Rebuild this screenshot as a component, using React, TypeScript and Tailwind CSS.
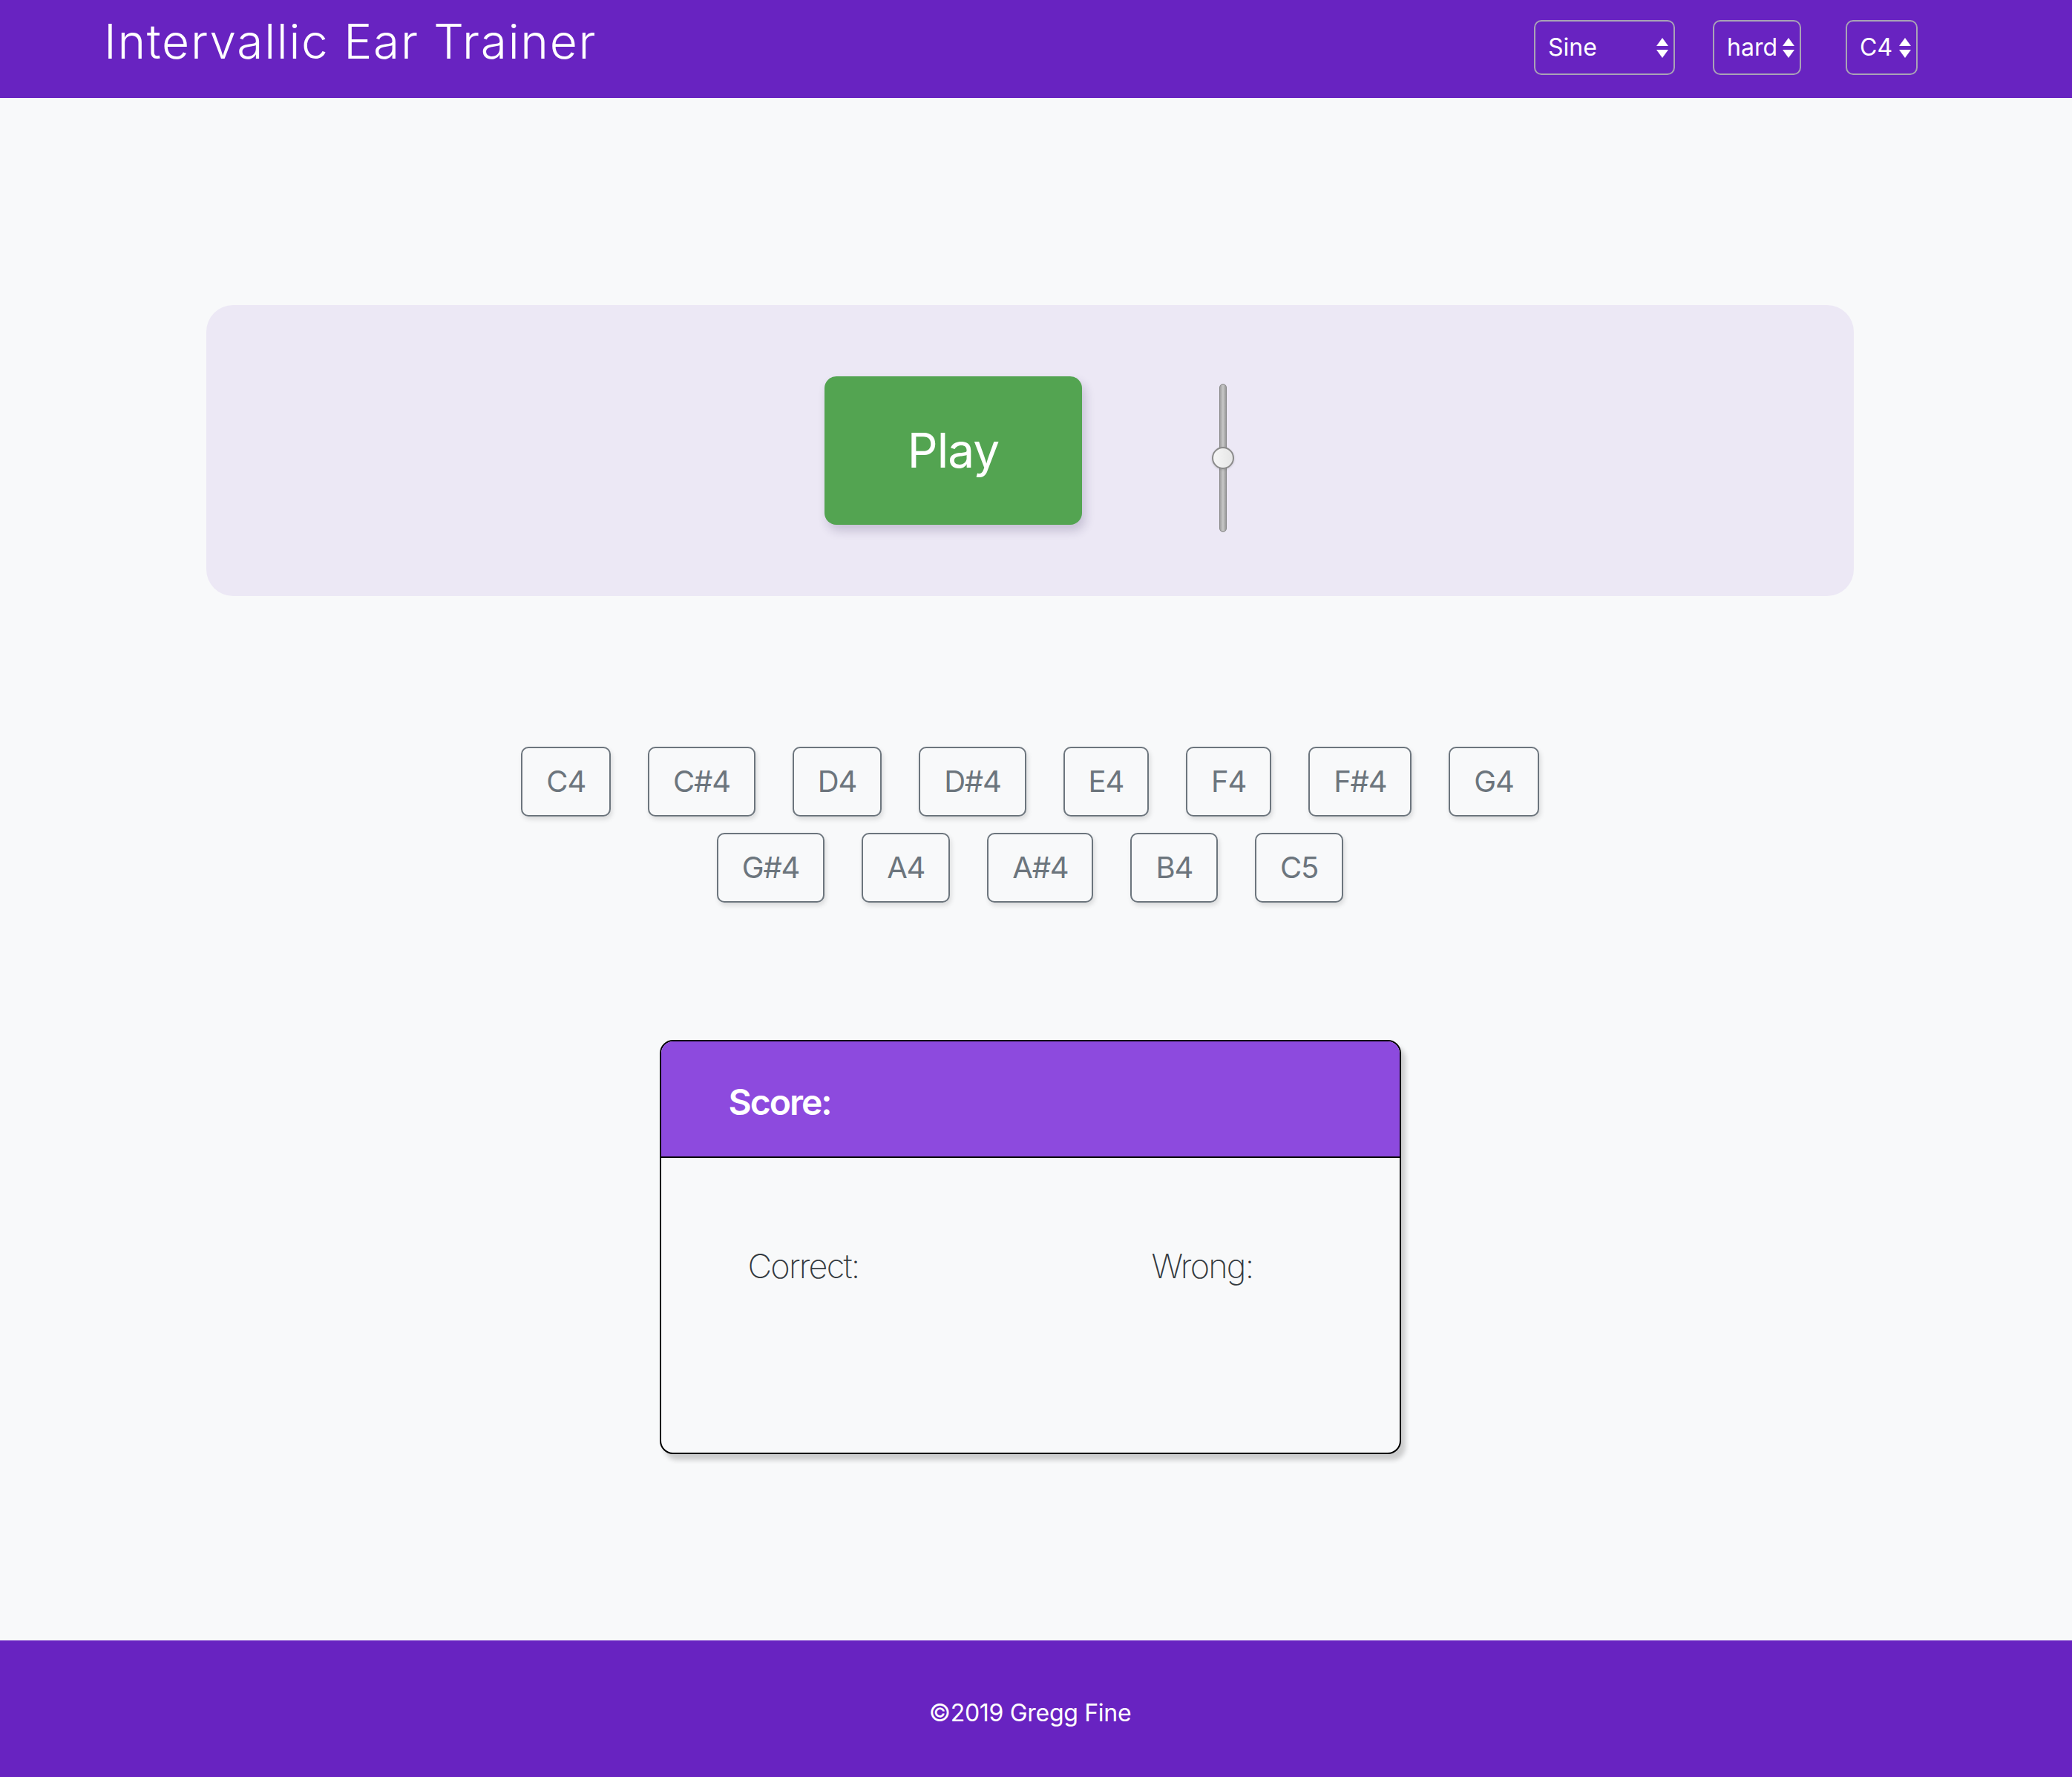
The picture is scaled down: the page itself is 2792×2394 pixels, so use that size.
import React, { useState } from "react";

const notesTop = ["C4", "C#4", "D4", "D#4", "E4", "F4", "F#4", "G4"];
const notesBottom = ["G#4", "A4", "A#4", "B4", "C5"];

function SelectBox({
    value,
    options,
    width,
    onChange,
}: {
    value: string;
    options: string[];
    width: string;
    onChange: (v: string) => void;
}) {
    return (
        <div className={`relative h-[74px] ${width}`}>
            <select
                value={value}
                onChange={(e) => onChange(e.target.value)}
                className="w-full h-full appearance-none bg-transparent border-2 border-[#a9a3b6] rounded-[10px] pl-[17px] text-[32px] text-white outline-none"
            >
                {options.map((o) => (
                    <option key={o} value={o} className="text-black">
                        {o}
                    </option>
                ))}
            </select>
            {/* up/down arrows */}
            <svg
                className="pointer-events-none absolute right-[9px] top-[24px]"
                width="16"
                height="27"
                viewBox="0 0 16 27"
            >
                <polygon points="8,0 16,11 0,11" fill="white" />
                <polygon points="0,16 16,16 8,27" fill="white" />
            </svg>
        </div>
    );
}

function NoteButton({ note, onClick }: { note: string; onClick: () => void }) {
    return (
        <button
            onClick={onClick}
            className="px-[32px] py-[15px] text-[40px] leading-[60px] tracking-[-1.2px] text-[#6c757d] border-2 border-[#6c757d] rounded-[10px] bg-[#f8f9fa] shadow-[2px_4px_6px_rgba(0,0,0,0.12)] hover:bg-[#6c757d] hover:text-white"
        >
            {note}
        </button>
    );
}

export default function App() {
    const [wave, setWave] = useState("Sine");
    const [level, setLevel] = useState("hard");
    const [root, setRoot] = useState("C4");
    const [correct, setCorrect] = useState<number | null>(null);
    const [wrong, setWrong] = useState<number | null>(null);

    const guess = (note: string) => {
        if (note === root) setCorrect((c) => (c ?? 0) + 1);
        else setWrong((w) => (w ?? 0) + 1);
    };

    return (
        <div className="min-h-screen flex flex-col bg-[#f8f9fa] font-['Inter','Noto_Sans',sans-serif]">
            {/* Navbar */}
            <header className="h-[132px] shrink-0 bg-[#6823c1] flex items-start pl-[140px] pr-[208px]">
                <h1 className="mt-[17px] text-[64px] leading-[77px] font-light tracking-[1.7px] text-white">
                    Intervallic Ear Trainer
                </h1>
                <div className="ml-auto mt-[27px] flex">
                    <SelectBox
                        value={wave}
                        options={["Sine", "Square", "Triangle", "Sawtooth"]}
                        width="w-[190px]"
                        onChange={setWave}
                    />
                    <div className="ml-[51px]">
                        <SelectBox
                            value={level}
                            options={["easy", "medium", "hard"]}
                            width="w-[119px]"
                            onChange={setLevel}
                        />
                    </div>
                    <div className="ml-[60px]">
                        <SelectBox
                            value={root}
                            options={["C4", "D4", "E4", "F4", "G4", "A4", "B4"]}
                            width="w-[97px]"
                            onChange={setRoot}
                        />
                    </div>
                </div>
            </header>

            <main className="flex-1 flex flex-col items-center pr-[16px] pt-[279px] pb-[250px]">
                {/* Play panel */}
                <div className="w-[2220px] h-[392px] rounded-[36px] bg-[#ece8f5] flex items-center justify-center gap-[173px]">
                    <button className="w-[347px] h-[200px] rounded-[16px] bg-[#53a451] text-white text-[64px] tracking-[-1px] shadow-[4px_8px_14px_rgba(40,30,80,0.2)] hover:bg-[#4a9448]">
                        Play
                    </button>
                    <div className="relative mt-[20px] w-[34px] h-[200px] flex justify-center">
                        <div className="w-[10px] h-[200px] rounded-full border border-[#888] bg-gradient-to-r from-[#a0a0a0] via-[#c8c8c8] to-[#9a9a9a]" />
                        <div className="absolute left-[2px] top-[85px] w-[30px] h-[30px] rounded-full border-2 border-[#8a8a8a] bg-gradient-to-r from-[#f6f6f6] to-[#e6e6e6] shadow-[0_1px_3px_rgba(0,0,0,0.15)]" />
                    </div>
                </div>

                {/* Note buttons */}
                <div className="mt-[203px] flex flex-col items-center gap-[22px]">
                    <div className="flex gap-[50px]">
                        {notesTop.map((n) => (
                            <NoteButton key={n} note={n} onClick={() => guess(n)} />
                        ))}
                    </div>
                    <div className="flex gap-[50px]">
                        {notesBottom.map((n) => (
                            <NoteButton key={n} note={n} onClick={() => guess(n)} />
                        ))}
                    </div>
                </div>

                {/* Score card */}
                <div className="mt-[185px] w-[999px] h-[558px] border-2 border-black rounded-[18px] overflow-hidden bg-[#f8f9fa] shadow-[6px_8px_6px_rgba(0,0,0,0.18)] flex flex-col">
                    <div className="h-[157px] bg-[#8d4ade] border-b-2 border-black flex items-center pl-[91px] pt-[8px]">
                        <h4 className="text-[48px] font-semibold tracking-[-2px] text-white">Score:</h4>
                    </div>
                    <div className="flex pt-[118px] text-[45px] leading-[56px] font-extralight tracking-[-1.8px] text-[#343a40]">
                        <div className="w-[661px] pl-[117px]">Correct: {correct ?? ""}</div>
                        <div>Wrong: {wrong ?? ""}</div>
                    </div>
                </div>
            </main>

            <footer className="h-[184px] shrink-0 bg-[#6823c1] flex items-center justify-center pr-[16px] pt-[12px]">
                <p className="text-[32px] tracking-[-0.3px] text-white">©2019 Gregg Fine</p>
            </footer>
        </div>
    );
}
